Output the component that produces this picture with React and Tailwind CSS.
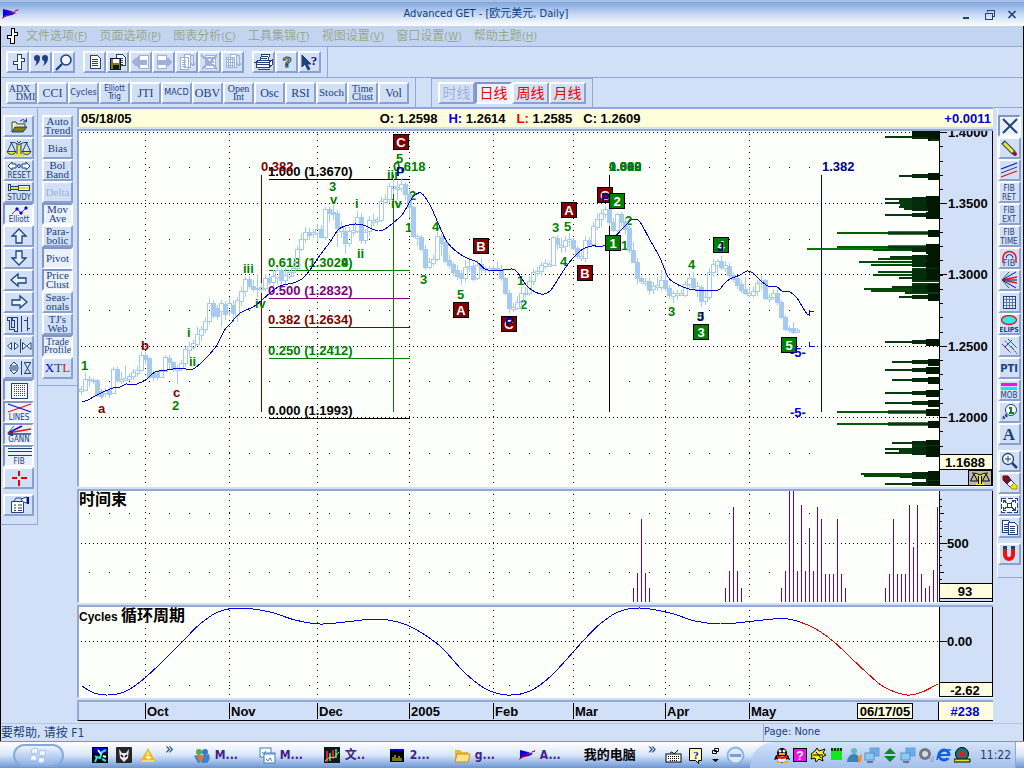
import React from "react";

const INK = "#21417c";

/* ---------- shared pieces ---------- */

function Tool({ label, pressed, disabled, className = "", children }) {
  const look = pressed
    ? "border-t-[#8296c4] border-l-[#8296c4] border-r-white border-b-white bg-[#eaf1fc]"
    : "border-t-white border-l-white border-r-[#8ba0cd] border-b-[#8ba0cd] bg-[#d1e0f6]";
  return (
    <button
      type="button"
      aria-label={label}
      aria-pressed={pressed ? true : undefined}
      disabled={disabled}
      className={`flex h-[22px] shrink-0 items-center justify-center overflow-hidden border-2 text-center whitespace-pre ${look} ${className}`}
    >
      {children}
    </button>
  );
}

function Svg({ w = 26, h = 18, children, crisp = true }) {
  return (
    <svg
      width={w}
      height={h}
      viewBox={`0 0 ${w} ${h}`}
      fill="none"
      stroke={INK}
      shapeRendering={crisp ? "crispEdges" : "auto"}
      className="block shrink-0"
      aria-hidden="true"
    >
      {children}
    </svg>
  );
}

function Tiny({ x = 13, y = 17, size = 8, bold, children }) {
  return (
    <text x={x} y={y} fontSize={size} textAnchor="middle" fill={INK} stroke="none"
      fontWeight={bold ? 700 : 400} fontFamily='"DejaVu Sans Condensed","DejaVu Sans",sans-serif'>
      {children}
    </text>
  );
}

/* ---------- icons ---------- */

const ScalesIcon = () => (
  <Svg crisp={false}>
    <path d="M11 4h4v12h-4z" fill="#f0e820" stroke="none" />
    <path d="M8 16.500h10" stroke="#e8e020" strokeWidth="2" />
    <path d="M11 5v10M15 5v10M4 3.500q4-1 9 2 5-3 9-2M11 2l2 2 2-2" />
    <path d="M5.500 4L1.500 12.500h8zM20.500 4l-4 8.500h8z" />
    <path d="M1 12.500h9q-1 3-4.500 3T1 12.500zM16 12.500h9q-1 3-4.500 3t-4.500-3z" fill="#f0e820" />
  </Svg>
);

const LogoMark = () => (
  <svg width="17" height="12" viewBox="0 0 17 12" aria-hidden="true" className="block">
    <path d="M1 1l4 1 4 1 5 2-4 2-5 1-4 2z" fill="#0000f0" />
    <path d="M0 10.500l4-3.500 2 1 3-4 2 2 3-4 1 1 1-2" fill="none" stroke="#e00020" />
  </svg>
);

const BarMark = ({ w = 20 }) => (
  <Svg w={w} h={18}>
    <path d="M9.500 1.500h4v4h3v3h-3v8h-4v-5h-4v-3h4z" fill="#fff" />
  </Svg>
);

const Page = ({ x = 4, y = 2, w = 9, h = 12 }) => (
  <g>
    <path d={`M${x} ${y}h${w - 3}l3 3v${h - 3}h-${w}z`} fill="#fff" />
    <path d={`M${x + 2} ${y + 4}h${w - 4}M${x + 2} ${y + 6}h${w - 4}M${x + 2} ${y + 8}h${w - 4}M${x + 2} ${y + 10}h${w - 4}`} strokeWidth="1" />
  </g>
);

const G = "#9fb2d6";

const fileTools = [
  ["Bar type", <BarMark />],
  ["Quotes", <Svg w={20} crisp={false}><path d="M3 5a3 3 0 116 0c0 4-2 6-5 8 1-2 2-4 1-5-1 0-2-1-2-3zM11 5a3 3 0 116 0c0 4-2 6-5 8 1-2 2-4 1-5-1 0-2-1-2-3z" fill={INK} stroke="none" /></Svg>],
  ["Search", <Svg w={20} crisp={false}><circle cx="12" cy="7" r="5" fill="#eef5ff" strokeWidth="1.6" /><path d="M8 11l-6 6" strokeWidth="2.4" /></Svg>],
  null,
  ["New", <Svg w={20}><Page x={5} y={2} w={10} h={13} /></Svg>],
  ["Save", <Svg w={20}><Page x={8} y={1} w={9} h={11} /><rect x="2.5" y="5.500" width="10" height="11" fill="#7d7b12" stroke="#101830" /><rect x="5" y="6" width="6" height="4" fill="#fff" stroke="none" /><rect x="5" y="12" width="6" height="4" fill="#101830" stroke="none" /></Svg>],
  ["Previous page", <Svg w={20}><path d="M8 2h9v13H8z" fill="#fff" stroke={G} /><path d="M1 9l6-5v3h8v4H7v3z" fill={G} stroke={G} /></Svg>, 1],
  ["Next page", <Svg w={20}><path d="M3 2h9v13H3z" fill="#fff" stroke={G} /><path d="M18 9l-6-5v3H4v4h8v3z" fill={G} stroke={G} /></Svg>, 1],
  ["Copy page", <Svg w={20}><g stroke={G}><path d="M7 1h6v13H7zM3 4h8v12H3z" fill="#fff" /><path d="M5 7h4M5 9h4M5 11h4M5 13h4M13 2h3v10M14 10l2 3 2-3" stroke={G} /></g></Svg>, 1],
  ["Delete page", <Svg w={20}><path d="M5 2h10v13H5z" fill="#fff" stroke={G} /><path d="M1 2l16 14M17 2L2 16M6 5h8M6 9h8M6 12h8" stroke={G} strokeWidth="2" /></Svg>, 1],
  ["Paste page", <Svg w={20}><g stroke={G}><path d="M7 1h6v13H7zM3 4h8v10H3z" fill="#fff" /><path d="M3 6h8M3 9h8M3 12h8M5 4v11M9 4v11M13 2h3v10M14 10l2 3 2-3" stroke={G} /></g></Svg>, 1],
  null,
  ["Print", <Svg w={20}><path d="M6 7l2-6h8l-2 6" fill="#fff" /><path d="M2 9l3-2h12l-2 2zM2 9h13v5H2zM15 9l3-2v5l-3 2" fill="#fff" /><path d="M8 3.500h6M7 5.500h6M2 11.500h13M4 16h12" /></Svg>],
  ["Help", <Svg w={20} crisp={false}><text x="10" y="14" fontSize="15" fontWeight="700" textAnchor="middle" fill="#f4ee20" stroke={INK} strokeWidth="1" fontFamily='"Liberation Sans",sans-serif'>?</text></Svg>],
  ["Context help", <Svg w={20} crisp={false}><path d="M2 2v12l3-3 3 6 2-1-3-5h4z" fill={INK} /><text x="14" y="12" fontSize="13" fontWeight="700" textAnchor="middle" fill="#10108c" stroke="none" fontFamily='"Liberation Serif",serif'>?</text></Svg>],
];

const Lbl = ({ size = 11, children }) => (
  <span className={size === 12 ? "text-[12px] leading-[12px]" : size === 10 ? "text-[10px] leading-[8px]" : "text-[11px] leading-[9px]"}>{children}</span>
);

const studyTools = [
  ["ADX DMI", <span className="flex flex-col text-[10px] leading-[8px]"><span className="pr-1">ADX</span><span className="pl-2">DMI</span></span>],
  ["CCI", <Lbl size={12}>CCI</Lbl>],
  ["Cycles", <span className="font-['DejaVu_Sans_Condensed',sans-serif] text-[9px]">Cycles</span>],
  ["Elliott Trig", <span className="font-['DejaVu_Sans_Condensed',sans-serif] text-[8px] leading-[8px]">{"Elliott\nTrig"}</span>],
  ["JTI", <Lbl size={12}>JTI</Lbl>],
  ["MACD", <span className="font-['DejaVu_Sans_Condensed',sans-serif] text-[9px]">MACD</span>],
  ["OBV", <Lbl size={12}>OBV</Lbl>],
  ["Open Int", <Lbl size={10}>{"Open\nInt"}</Lbl>],
  ["Osc", <Lbl size={12}>Osc</Lbl>],
  ["RSI", <Lbl size={12}>RSI</Lbl>],
  ["Stoch", <Lbl>Stoch</Lbl>],
  ["Time Clust", <Lbl size={10}>{"Time\nClust"}</Lbl>],
  ["Vol", <Lbl size={12}>Vol</Lbl>],
];

const arrow = {
  up: "M13 2l7 7h-4v7h-6V9H6z",
  down: "M13 16l7-7h-4V2h-6v7H6z",
  left: "M5 9l7-6v4h8v5h-8v3z",
  right: "M21 9l-7-6v4H6v5h8v3z",
};
const Arrow = ({ d }) => <Svg crisp={false}><path d={arrow[d]} fill="#e4f2fd" strokeWidth="1.3" /></Svg>;

const gridDots = [];
for (let r = 0; r < 6; r++) for (let c = 0; c < 6; c++) gridDots.push([7 + c * 2, 4 + r * 2]);

const leftTools = [
  ["Open", <Svg crisp={false}><path d="M6 15V5h4l1 2h8v3" fill="#fffb9a" /><path d="M6 15l3-5h12l-4 5z" fill="#7d7b12" /><path d="M14 4q3-3 6 0M17 5h3.500V1.500" /></Svg>],
  ["Scales", <ScalesIcon />],
  ["Reset", <Svg crisp={false}><path d="M2 5l4-4v2h4v4H6v2zM24 5l-4-4v2h-4v4h4v2z" fill="#fff" /><circle cx="13" cy="5" r="1.500" /><Tiny y={17} size={8}>RESET</Tiny></Svg>],
  ["Study", <Svg><path d="M2.500 1.500h2v6h-2zM4.500 3.500h8v3h-8zM12.500 2.500h11v5h-11z" fill="#fff" /><path d="M5 5h7M13 5h10" stroke="#e8e020" strokeWidth="2" /><Tiny y={17} size={8}>STUDY</Tiny></Svg>],
  ["Elliott", <Svg crisp={false}><path d="M6 9l5-5 4 4 6-6" stroke="#e01020" /><path d="M10 3h2v2h-2zM14 7h2v2h-2zM19 2h2v2h-2z" fill="#0000f0" stroke="#0000f0" /><Tiny y={17} size={8}>Elliott</Tiny></Svg>, 1],
  ["Scroll up", <Arrow d="up" />],
  ["Scroll down", <Arrow d="down" />],
  ["Scroll left", <Arrow d="left" />],
  ["Scroll right", <Arrow d="right" />],
  ["Bar spacing", <Svg><path d="M1.500 2.500h4v10h3v-7h-2v-3h5v14h-3v-2h-5v-9h-2zM15.500 1v16M18 5.500h3.500M21.500 2v14M21.500 13.500H24" /></Svg>],
  ["Squeeze bars", <Svg crisp={false}><path d="M5.500 5.500L1.500 9l4 3.500zM8.500 5.500l4 3.500-4 3.500zM16.500 5.500l4 3.500-4 3.500zM25 5.500L21 9l4 3.500z" fill="#fff" /><path d="M14.500 2v14" /></Svg>],
  ["Squeeze price", <Svg crisp={false}><path d="M8 3l4 4H4zM8 15l4-4H4z" fill="#fff" /><path d="M3 9h10M15.500 2v14M18 3.500h7M18 14.500h7M18.500 4l6 10.500M24.500 4l-6 10.500" /></Svg>],
  ["Grid", <Svg><path d="M5 2h16v15H5z" fill="#fff" />{gridDots.map(([x, y]) => <rect key={`${x}-${y}`} x={x + 1} y={y} width="1" height="1" fill={INK} stroke="none" />)}</Svg>, 1],
  ["Lines", <Svg crisp={false}><path d="M2 9L25 1" stroke="#f01010" strokeWidth="1.300" /><path d="M2 1l23 8" stroke="#1010d0" strokeWidth="1.300" /><Tiny y={17} size={8}>LINES</Tiny></Svg>, 1],
  ["Gann", <Svg crisp={false}><path d="M2 8l6-7" stroke="#108030" /><path d="M2 8l14-7" stroke="#1010d0" strokeWidth="1.500" /><path d="M2 8l23-4" stroke="#f01010" strokeWidth="1.500" /><path d="M2 9h23" strokeWidth="1.500" /><path d="M1 9l6-3v5z" fill={INK} stroke="none" /><Tiny y={17} size={8}>GANN</Tiny></Svg>, 1],
  ["Fibonacci", <Svg><path d="M2 1.500h24M2 4.500h24M2 8.500h24" /><Tiny y={17} size={8}>FIB</Tiny></Svg>, 1],
  ["Crosshair", <Svg><path d="M13 2v5M13 11v6M6 9h5M15 9h6" stroke="#f00000" strokeWidth="2" /></Svg>],
  null,
  ["Properties", <Svg crisp={false}><path d="M5.500 5.500h12v11h-12z" fill="#fff" /><path d="M8 5l2-3h5l2 3M8 9h2M12 9h4M8 12h2M12 12h4M8 14.500h2M12 14.500h4" /><path d="M15 3l6-2v6l-4-1z" fill="#fff" /><path d="M22 1v7" stroke="#10108c" strokeWidth="2" /></Svg>],
];

const studies = [
  ["Auto\nTrend"], ["Bias"], ["Bol\nBand"], ["Delta", 0, 1], ["Mov\nAve", 1], ["Para-\nbolic"],
  ["Pivot", 1], ["Price\nClust", 1], ["Seas-\nonals"], ["TJ's\nWeb"], ["Trade\nProfile", 1],
];

const R = ({ children, crisp }) => <Svg w={19} crisp={crisp}>{children}</Svg>;
const Two = ({ a, b }) => <R><Tiny x={9} y={8} size={8}>{a}</Tiny><Tiny x={9} y={17} size={8}>{b}</Tiny></R>;

const rightTools = [
  ["Delete all", <R crisp={false}><path d="M3 2l14 14M17 2L3 16" strokeWidth="2" /></R>, 1],
  ["Draw", <R crisp={false}><path d="M3 3l11 11" strokeWidth="5" /><path d="M4 4l9 9" stroke="#f0e820" strokeWidth="3" /><circle cx="15" cy="15" r="2" fill="#8a1020" stroke="none" /></R>],
  ["Parallel lines", <R crisp={false}><path d="M1 8l16-6" stroke="#1010d0" strokeWidth="1.300" /><path d="M1 12l16-6M1 9.500" /><path d="M1 16l16-6" stroke="#e01010" strokeWidth="1.300" /></R>],
  ["Fibonacci retracement", <Two a="FIB" b="RET" />],
  ["Fibonacci extension", <Two a="FIB" b="EXT" />],
  ["Fibonacci time", <Two a="FIB" b="TIME" />],
  ["Fibonacci arc", <R crisp={false}><path d="M3 14V9a6.500 6.500 0 0113 0v5" stroke="#f01010" strokeWidth="1.500" /><path d="M6 9a3.500 3.500 0 017 0" stroke="#1010d0" /><Tiny x={9} y={17} size={9}>FIB</Tiny></R>],
  ["Gann fan", <R crisp={false}><path d="M2 9l7-8M2 9l7 8" stroke="#108030" /><path d="M2 9l14-8M2 9l14 8" stroke="#1010d0" /><path d="M2 9l15-3M2 9l15 3" stroke="#f01010" strokeWidth="1.400" /><path d="M2 9h15" strokeWidth="1.300" /></R>],
  ["Gann box", <R><path d="M3 3h12v12H3zM6 3v12M9 3v12M12 3v12M3 6h12M3 9h12M3 12h12" fill="#e4effc" stroke="#6079a8" /><path d="M3 3h12v12H3z" /></R>],
  ["Ellipse", <R crisp={false}><ellipse cx="9" cy="5" rx="7.500" ry="4.500" fill="#30e8ee" stroke="#f01010" strokeWidth="1.300" /><Tiny x={9} y={17} size={7} bold>ELIPS</Tiny></R>],
  ["Pitchfork", <R crisp={false}><path d="M2 7l9 9M5 4l9 9M8 2l9 9M11 9l6 8" strokeDasharray="2 1" /><path d="M3 8l6 6" stroke="#901828" /><path d="M9 3l7 7" stroke="#108030" /><path d="M5 10l7-7" /></R>],
  ["PTI", <R><Tiny x={9} y={13} size={11} bold>PTI</Tiny></R>],
  ["MOB", <R><path d="M1 3h16" stroke="#f010f0" strokeWidth="3" /><path d="M1 7h16" stroke="#10e8f0" strokeWidth="3" /><Tiny x={9} y={17} size={8}>MOB</Tiny></R>],
  ["Expert", <R crisp={false}><circle cx="11" cy="7" r="5.500" fill="#fff" /><path d="M7 12l-5 4" strokeWidth="3" strokeDasharray="2 1" /><path d="M9 5h2v5M9 10h5" stroke="#108030" strokeWidth="2" /></R>],
  ["Text", <R crisp={false}><text x="9" y="15" fontSize="17" fontWeight="700" textAnchor="middle" fill={INK} stroke="none" fontFamily='"Liberation Serif",serif'>A</text></R>],
  null,
  ["Zoom in", <R crisp={false}><circle cx="8" cy="7" r="5.500" fill="#eef6ff" strokeWidth="1.300" /><path d="M5 7h6M8 4v6" /><path d="M12 11l5 5" strokeWidth="2.500" /></R>],
  ["Erase", <R crisp={false}><path d="M3 2h5l3 4-4 4-4-4z" fill="#7c1020" stroke="#5c0818" /><path d="M7 10l4-4 3 3-4 4z" fill="#fff" /><path d="M10 13l4-4 3 3v3h-5z" fill="#f0e020" stroke="#a09010" /></R>],
  ["Expand", <R><path d="M1 2h16v14H1z" fill="#fff" strokeDasharray="5 2" /><path d="M3 4l4 3M15 4l-4 3M3 14l4-3M15 14l-4-3M7 7h4v4H7zM3 7V4h3M12 4h3v3M3 11v3h3M15 11v3h-3" /></R>],
  ["Pages", <R><Page x={2} y={2} w={9} h={12} /><Page x={8} y={4} w={9} h={12} /></R>],
  null,
  ["Magnet", <R crisp={false}><path d="M5 3v7a4 4 0 008 0V3" stroke="#f01010" strokeWidth="4" /><path d="M3 2.500h4M11 2.500h4" strokeWidth="3" /></R>],
];

/* ---------- chart data: [top, bottom, down, high, low] ---------- */

const candles = [
  [389,391,0,386,395],[379,390,0,373,390],[379,380,0,376,387],[380,381,0,378,384],[380,395,1,379,397],[391,396,1,389,399],
  [391,393,0,388,397],[390,394,1,388,398],[369,393,0,367,393],[369,380,1,367,383],[379,381,0,372,384],[378,380,0,365,381],
  [376,379,0,373,381],[372,376,0,369,380],[370,373,0,366,377],[355,370,0,352,371],[355,359,1,352,364],[358,377,1,357,379],
  [373,377,1,371,381],[373,377,1,370,380],[371,377,0,369,378],[357,371,0,355,372],[358,362,1,355,370],[362,369,1,361,372],
  [368,370,0,365,384],[363,368,0,360,371],[349,363,0,347,367],[346,350,0,342,357],[343,347,0,339,350],[334,344,0,327,346],
  [329,335,0,326,341],[321,329,0,318,333],[303,321,0,298,324],[303,315,1,300,318],[308,316,1,305,320],[303,311,0,300,327],
  [304,314,1,301,320],[303,311,0,297,316],[305,313,1,300,322],[300,315,0,297,322],[291,301,0,287,306],[279,291,0,277,297],
  [279,286,1,276,289],[286,289,1,280,292],[288,289,0,274,297],[287,289,0,283,293],[278,288,0,274,291],[278,282,1,275,285],
  [276,282,0,270,286],[270,277,0,267,284],[270,280,1,268,285],[275,280,0,268,284],[272,276,0,270,279],[268,272,0,262,277],
  [249,268,0,246,270],[239,249,0,233,251],[232,239,0,227,243],[232,235,1,228,240],[232,234,0,229,238],[229,233,0,224,242],
  [229,237,1,225,238],[209,237,0,207,240],[209,213,1,207,222],[212,214,1,205,220],[213,228,1,210,247],[227,231,0,221,238],
  [231,243,1,226,254],[231,243,0,227,247],[230,232,0,222,236],[217,231,0,211,233],[217,240,1,213,244],[232,240,0,229,244],
  [220,231,0,216,236],[220,222,0,214,226],[219,221,0,217,225],[201,220,0,197,222],[199,202,0,194,204],[186,199,0,183,203],
  [186,188,0,178,194],[187,189,0,181,200],[184,188,0,178,192],[184,194,1,182,200],[194,207,1,190,218],[207,236,1,206,238],
  [236,238,0,234,246],[237,249,1,235,251],[249,267,1,245,270],[262,267,0,258,269],[259,263,0,255,266],[236,259,0,232,261],
  [237,243,1,234,256],[242,261,1,240,263],[260,265,1,255,269],[264,272,1,262,276],[270,276,1,265,280],[273,278,1,270,285],
  [267,278,0,260,282],[266,268,0,257,272],[266,279,1,262,281],[265,278,0,260,280],[264,269,1,258,273],[268,270,0,266,273],
  [268,270,0,266,273],[268,269,0,265,272],[268,269,0,261,271],[269,278,1,265,281],[278,293,1,277,295],[293,308,1,290,313],
  [307,309,0,303,312],[302,308,0,296,310],[293,302,0,287,311],[293,294,0,287,297],[281,293,0,276,296],[272,281,0,269,285],
  [271,273,0,267,276],[265,271,0,262,276],[263,266,0,259,269],[264,266,0,261,267],[237,265,0,236,266],[238,244,1,235,250],
  [245,247,0,238,253],[240,246,0,236,252],[239,241,0,233,247],[240,248,1,238,250],[248,256,1,246,259],[256,258,0,252,261],
  [240,258,0,236,262],[240,244,1,237,247],[226,244,0,222,247],[219,227,0,213,230],[213,219,0,209,227],[209,214,0,206,218],
  [209,222,1,204,226],[222,230,1,218,232],[214,230,0,213,232],[214,222,1,212,226],[221,229,1,217,235],[228,250,1,226,253],
  [250,262,1,242,263],[262,278,1,258,284],[278,281,1,276,284],[281,283,0,278,286],[281,290,1,278,295],[286,289,0,282,294],
  [285,287,0,277,291],[280,287,0,270,291],[280,288,1,266,291],[288,295,1,285,299],[293,296,0,291,303],[293,295,0,290,300],
  [293,295,0,290,296],[284,295,0,281,297],[278,284,0,275,288],[278,287,1,272,290],[286,289,0,282,297],[287,301,1,285,307],
  [297,301,0,290,305],[272,297,0,268,300],[264,272,0,259,276],[261,265,0,259,273],[261,267,1,256,270],[265,268,0,261,272],
  [266,275,1,263,279],[275,279,1,272,282],[278,285,1,275,289],[284,290,1,280,293],[289,293,1,277,295],[293,295,0,287,297],
  [291,295,0,287,298],[283,291,0,280,296],[280,283,0,276,290],[280,298,1,279,300],[297,299,0,294,303],[293,297,0,289,300],
  [293,302,1,289,305],[302,317,1,300,319],[317,329,1,315,331],[328,330,1,326,333],[328,332,1,322,334],[330,332,0,328,333],
];

const average = [
  [82,402],[88,400],[95,396],[103,392],[113,388],[120,387],[126,384],[130,385],[137,384],[147,379],[155,372],[167,370],[182,368],[189,370],[195,368],
  [207,357],[217,345],[224,331],[231,323],[240,313],[253,307],[262,300],[270,293],[280,286],[293,283],[302,279],[310,270],[318,258],[330,242],[338,230],
  [345,226],[355,224],[363,225],[370,228],[378,231],[385,229],[393,223],[402,215],[408,205],[413,197],[421,193],[430,205],[438,223],[447,242],[457,252],
  [469,259],[477,262],[485,269],[495,271],[512,269],[518,273],[528,287],[541,294],[550,291],[560,276],[568,264],[577,254],[583,249],[592,246],[603,246],
  [612,240],[622,229],[630,221],[634,219],[640,222],[650,240],[660,258],[668,277],[675,283],[683,287],[695,290],[718,290],[723,285],[730,279],[740,275],
  [747,271],[753,273],[760,280],[768,286],[777,287],[782,291],[790,292],[797,298],[803,308],[807,314],[809,315],
];

const months = [["Oct", 145], ["Nov", 229], ["Dec", 317], ["2005", 409], ["Feb", 493], ["Mar", 573], ["Apr", 665], ["May", 749]];

const GREEN = "#008000", MAROON = "#800000", NAVY = "#000080", PURPLE = "#800080";

const levels = [
  ["1.000 (1.3670)", 179, "#000"], ["0.618 (1.3029)", 270, GREEN], ["0.500 (1.2832)", 298, PURPLE],
  ["0.382 (1.2634)", 327, MAROON], ["0.250 (1.2412)", 358, GREEN], ["0.000 (1.1993)", 418, "#000"],
];

const waves = [
  ["1",81,370],["a",98,413,MAROON],["b",141,350,MAROON],["c",173,397,MAROON],["2",172,410],["i",187,337],["ii",189,366],["iii",243,273],
  ["iv",255,308],["3",329,191],["v",330,204],["i",355,208],["ii",357,258],["5",396,163],["iii",387,179],["iv",391,208],["2",409,200],["1",405,232],
  ["4",432,231],["3",420,284],["5",457,299],["1",517,285],["2",520,309],["3",552,232],["5",564,231],["4",560,266],["2",625,225],["1",621,250],
  ["3",668,316],["4",688,269],["5",697,321],["J",697,321,NAVY],["4",341,267],["P",396,176,NAVY],
];

const tags = [
  ["C",393,134,0],["A",453,302,0],["B",473,238,0],["C",501,316,0,"P",10],["A",561,202,0],["B",577,265,0],["C",597,187,0,"P",15],
  ["2",609,193,1],["1",605,235,1],["4",713,237,1,"J",14],["3",693,324,1],["5",781,337,1],
];

const profile = [
  [136,885],[139,930],[175,899],[198,885],[200,899],[202,885],[204,900],[206,899],[208,904],[214,885],[232,837],[246,837],[248,807],[249,873],
  [256,890],[258,878],[261,859],[264,871],[268,912],[271,878],[274,873],[277,899],[280,912],[283,912],[286,892],[288,864],[290,871],[292,905],[296,899],
  [341,885],[361,892],[369,885],[379,892],[392,885],[402,885],[411,837],[423,837],[442,892],[445,912],[448,885],[450,899],[452,885],[473,861],[475,864],[476,900],[480,926],[483,885],
];
const barColor = (x) => (x < 830 ? "#007a00" : x < 850 ? "#006000" : x < 880 ? "#004a0a" : "#063a0e");

const clusterBars = [
  [633,588],[637,573],[641,519],[645,573],[649,588],[725,588],[729,571],[733,507],[737,571],[741,588],[781,588],[785,571],[789,491],[793,491],
  [797,571],[801,505],[805,571],[809,528],[813,571],[817,507],[821,519],[825,574],[829,574],[833,574],[837,519],[841,574],[845,588],[885,588],[889,574],
  [893,519],[897,574],[901,574],[905,574],[909,505],[913,547],[917,505],[921,574],[925,588],[929,586],[933,570],[937,507],
];

const smooth = (pts) => {
  let d = `M${pts[0][0]} ${pts[0][1]}`;
  for (let i = 0; i < pts.length - 1; i++) {
    const a = pts[Math.max(0, i - 1)], b = pts[i], c = pts[i + 1], e = pts[Math.min(pts.length - 1, i + 2)];
    d += `C${b[0] + (c[0] - a[0]) / 6} ${b[1] + (c[1] - a[1]) / 6} ${c[0] - (e[0] - b[0]) / 6} ${c[1] - (e[1] - b[1]) / 6} ${c[0]} ${c[1]}`;
  }
  return d;
};

const cycleBlue = [
  [82,686],[94,693],[108,695],[124,692],[140,682],[160,664],[183,641],[200,624],[218,612],[240,608],[270,612],[295,620],[320,624],[345,622],[375,619],[398,622],
  [415,629],[440,646],[465,673],[486,689],[507,695],[530,691],[552,675],[583,641],[600,624],[618,612],[640,608],[670,613],[695,621],[720,624],[745,622],[773,619],[788,619],[800,622],
];
const cycleRed = [[800,622],[816,629],[834,642],[850,657],[866,672],[884,687],[907,695],[922,692],[938,684]];

const chartFont = '"Liberation Sans","Noto Sans CJK SC",sans-serif';

function Plot({ top, height, majors, minors, children, axis, label }) {
  return (
    <div className="border-t-2 border-b border-l-2 border-t-[#93a9d4] border-b-white border-l-[#93a9d4]">
      <svg viewBox={`79 ${top} 914 ${height}`} className="block h-auto w-full bg-[#fcfffa]" shapeRendering="crispEdges"
        fontFamily={chartFont} fontWeight="700" fontSize="13" role="img" aria-label={label}>
        <g stroke="#000" fill="none">
          {majors.map((y) => <path key={y} d={`M81 ${y + 0.5}H938`} strokeDasharray="1 3" />)}
          {months.map(([m, x]) => <path key={m} d={`M${x + 0.5} ${top + 3}V${top + height}`} strokeDasharray="1 5" />)}
          {minors.map((y) => <path key={y} d={`M89 ${y + 0.5}H810`} strokeDasharray="1 19" />)}
        </g>
        {children}
        <rect x="939" y={top} width="54" height={height} fill="#d1e0f6" />
        <path d={`M939.5 ${top}V${top + height}M992.5 ${top}V${top + height}`} stroke="#000" />
        {axis}
      </svg>
    </div>
  );
}

function ValueBox({ y, h = 16, text }) {
  return (
    <g>
      <rect x="939.5" y={y + 0.5} width="53" height={h} fill="#fffee0" stroke="#000" />
      <text x="965" y={y + 13} textAnchor="middle">{text}</text>
    </g>
  );
}

const priceTicks = [];
for (let y = 132; y < 455; y += 14.25) priceTicks.push(Math.round(y));

function PriceChart() {
  return (
    <Plot top={131} height={355} majors={[132, 203, 274, 346, 417]} minors={[167, 239, 310, 381, 453]} label="欧元美元 daily price"
      axis={
        <g>
          {priceTicks.map((y) => <path key={y} d={`M940 ${y + 0.5}h3`} stroke="#000" />)}
          {["1.4000", "1.3500", "1.3000", "1.2500", "1.2000"].map((t, i) => {
            const y = [132, 203, 274, 346, 417][i];
            return <g key={t}><path d={`M940 ${y + 0.5}h7`} stroke="#000" /><text x="948" y={y + 5}>{t}</text></g>;
          })}
          <ValueBox y={454} h={15} text="1.1688" />
          <path d="M940 485.500h53" stroke="#000" />
          <rect x="968.5" y="470.500" width="23" height="15" fill="#b8b8b0" stroke="#000" />
          <g shapeRendering="auto" fill="none">
            <path d="M974 474q4 0 6 2 2-2 6-2M980 475v9M976 484h8" stroke="#f0e820" strokeWidth="2" />
            <path d="M974 474l-3.500 7h7zM986 474l-3.500 7h7zM972 473q5 0 8 2 3-2 8-2M978.500 476v8M981.500 476v8" stroke="#000" />
          </g>
        </g>
      }>
      {profile.map(([y, x], i) => (
        <g key={y} fill={barColor(x)}>
          <rect x={x} y={y} width={939 - x} height="2" />
          {x < 905 && <rect x={x < 850 ? 888 : 912} y={y - 1} width={x < 850 ? 51 : 27} height="4" fill="#052c0b" opacity={x < 850 ? 0.7 : 1} />}
          {x < 905 && <rect x={i % 2 ? 926 : 928} y={y - 2} width={i % 2 ? 13 : 11} height="7" fill="#031804" />}
        </g>
      ))}
      <rect x="912" y="131" width="27" height="6" fill="#031804" />
      {levels.map(([t, y, c]) => (
        <g key={t}><path d={`M269 ${y + 0.5}H410`} stroke={c} /><text x="268" y={y - 3} fill={c}>{t}</text></g>
      ))}
      <g fill="none">
        <path d="M261.5 175V412" stroke={MAROON} />
        <path d="M393.5 175V412" stroke={GREEN} />
        <path d="M609.5 175V412" stroke="#000" />
        <path d="M821.5 175V412" stroke={NAVY} />
      </g>
      <text x="261" y="171" fill={MAROON}>0.382</text>
      <text x="393" y="171" fill={GREEN}>0.618</text>
      <text x="609" y="171" fill={NAVY}>1.000</text>
      <text x="609" y="171" fill={GREEN}>0.618</text>
      <text x="609" y="171" fill={GREEN}>1.382</text>
      <text x="822" y="171" fill={NAVY}>1.382</text>
      {waves.filter((w) => !w[3] || w[3] === MAROON).map(([t, x, y, c]) => <text key={`${t}${x}${y}`} x={x} y={y} fill={c || GREEN}>{t}</text>)}
      <g stroke="#a6caf0">
        {candles.map(([t, b, down, hi, lo], i) => {
          const x = 81 + i * 4;
          return (
            <g key={i}>
              <path d={`M${x + 0.5} ${hi}V${t}M${x + 0.5} ${b}V${lo}`} />
              <rect x={x - 1.5} y={t + 0.5} width="4" height={Math.max(1, b - t)} fill={down ? "#a6caf0" : "none"} />
            </g>
          );
        })}
      </g>
      <path d={smooth(average)} fill="none" stroke="#0000d8" />
      <path d="M814 311.500h-4.500v4M809.500 342v4.500h5" fill="none" stroke="#0000d8" />
      {waves.filter((w) => w[3] === NAVY).map(([t, x, y, c]) => <text key={`${t}${x}`} x={x} y={y} fill={c}>{t}</text>)}
      {tags.map(([t, x, y, g, over, dy]) => (
        <g key={`${t}${x}`}>
          <rect x={x + 0.5} y={y + 0.5} width="15" height="15" fill={g ? GREEN : MAROON} stroke="#000" />
          <text x={x + 8} y={y + 13} textAnchor="middle" fill="#fff">{t}</text>
          {over && <text x={x + 4} y={y + dy} fill={NAVY}>{over}</text>}
        </g>
      ))}
      <text x="790" y="357" fill="#0000d8">-5-</text>
      <text x="790" y="417" fill="#0000d8">-5-</text>
    </Plot>
  );
}

function ClusterChart() {
  return (
    <Plot top={491} height={111} majors={[543]} minors={[513, 572]} label="时间束"
      axis={
        <g>
          {[499, 506, 513, 521, 528, 536, 550, 557, 565, 572, 579].map((y) => <path key={y} d={`M940 ${y + 0.5}h${y === 513 || y === 572 ? 4 : 2}`} stroke="#000" />)}
          <path d="M940 543.500h7" stroke="#000" /><text x="947" y="548">500</text>
          <ValueBox y={583} h={15} text="93" />
          <path d="M940 601.500h53" stroke="#000" />
        </g>
      }>
      <path d={clusterBars.map(([x, y]) => `M${x + 0.5} ${y}V602`).join("")} stroke="#780078" />
      <text x="79" y="505" fontSize="16">时间束</text>
    </Plot>
  );
}

function CycleChart() {
  return (
    <Plot top={607} height={90} majors={[641]} minors={[685]} label="Cycles 循环周期"
      axis={
        <g>
          <path d="M940 641.500h7" stroke="#000" /><text x="947" y="646">0.00</text>
          <ValueBox y={682} h={14} text="-2.62" />
        </g>
      }>
      <path d={smooth(cycleBlue)} fill="none" stroke="#0000f0" />
      <path d={smooth(cycleRed)} fill="none" stroke="#f00000" />
      <text x="79" y="621"><tspan fontSize="12">Cycles </tspan><tspan fontSize="16">循环周期</tspan></text>
    </Plot>
  );
}

function TimeAxis() {
  return (
    <div className="border-t-2 border-b border-l-2 border-t-[#93a9d4] border-b-black border-l-[#93a9d4]">
      <svg viewBox="79 702 914 18" className="block h-auto w-full bg-[#d1e0f6]" fontFamily={chartFont} fontWeight="700" fontSize="13" shapeRendering="crispEdges" role="img" aria-label="Dates">
        {months.map(([m, x]) => <g key={m}><path d={`M${x + 0.5} 703v16`} stroke="#000" /><text x={x + 2} y="716">{m}</text></g>)}
        <rect x="857.5" y="703.500" width="55" height="15" fill="#fffee0" stroke="#000" />
        <text x="885" y="716" textAnchor="middle">06/17/05</text>
        <rect x="939" y="702" width="54" height="18" fill="#fffee0" />
        <path d="M938.5 702v18" stroke="#000" />
        <text x="965" y="716" textAnchor="middle" fill="#0000d8">#238</text>
      </svg>
    </div>
  );
}

/* ---------- taskbar ---------- */

const T = ({ children, w = 17 }) => <svg width={w} height="17" viewBox={`0 0 ${w} 17`} className="block shrink-0" aria-hidden="true">{children}</svg>;

const quick = [
  ["Trading", <T><rect width="16" height="16" fill="#000" /><path d="M1 1h14v5H1z" fill="#0000c8" /><path d="M3 15l2-5 3 1 2-6 4-2M3 9l3 2M10 12l4 2" stroke="#20e8f0" strokeWidth="2" fill="none" /><path d="M6 3l3 4M11 9l3 1" stroke="#fff" strokeWidth="2" /></T>],
  ["Player", <T><rect width="16" height="16" rx="1" fill="#262626" /><path d="M3 2l3 4h4l3-4-1 9-4 4-4-4z" fill="#e8e8e8" /><path d="M5 8l2 2M11 8L9 10" stroke="#000" strokeWidth="1.500" /></T>],
  ["Prism", <T><path d="M8 1l8 14H0z" fill="#f4b818" /><path d="M8 4l2 4H6z" fill="#ffe890" /><path d="M6 10l3-1 2 2-3 1zM2 14h12" fill="#fff" stroke="#fff7c0" /></T>],
];

const People = <T><circle cx="5" cy="5" r="3" fill="#58a848" /><circle cx="11" cy="5" r="3" fill="#3c78c8" /><path d="M0 9q6-3 8 6l-4 1zM8 8l7-1q2 6-2 9H8z" fill="#3888c8" /><path d="M2 8l5 8 3-8" fill="#e87820" /></T>;
const Windows = <T><rect x="1" y="1" width="11" height="9" fill="#fff" stroke="#3c80c0" /><rect x="5" y="6" width="11" height="10" fill="#fff" stroke="#3c80c0" /><path d="M5 7h11M3 5l2 2 2-3M7 12l2 2 2-3 2 3" stroke="#3c80c0" fill="none" /></T>;
const Bars = <T><rect width="16" height="16" fill="#101818" /><path d="M3 4v11M9 3v8" stroke="#e02020" strokeWidth="2" /><path d="M6 6v8M12 2v9" stroke="#20b8a8" strokeWidth="2" /><path d="M1 14l5-4 4 1 5-6" stroke="#f0e020" fill="none" /></T>;
const Hist = <T><rect x="1" y="2" width="14" height="13" fill="#000" /><path d="M1 3h14" stroke="#0000c8" strokeWidth="2" /><path d="M4 14v-4M6 14V8M8 14v-3M10 14V9M12 14v-3" stroke="#f0f020" /></T>;
const Folder = <T><path d="M1 14V3h5l2 2h6v9z" fill="#e8b838" /><path d="M1 15l2-8h13l-2 8z" fill="#fbe488" stroke="#c89020" /></T>;

const tasks = [["M...", People], ["M...", Windows], ["文..", Bars], ["2...", Hist], ["g...", Folder], ["A...", <LogoMark />]];

const Monitors = <T><rect x="6" y="1" width="9" height="8" fill="#60b0f0" stroke="#8098c0" /><rect x="1" y="6" width="9" height="7" fill="#80d0ff" stroke="#7088b0" /><path d="M3 15h6" stroke="#6078a0" strokeWidth="2" /></T>;

const tray = [
  <T><ellipse cx="8" cy="6" rx="5" ry="5" fill="#000" /><path d="M2 8h12l2 5-3-1-5 4-5-4-3 1z" fill="#000" /><ellipse cx="8" cy="12" rx="4" ry="3" fill="#fff" /><path d="M3 8q5 3 10 0v3q-5 2-10 0z" fill="#e81010" /><circle cx="6" cy="4" r="1.500" fill="#fff" /><circle cx="10" cy="4" r="1.500" fill="#fff" /><path d="M5 7h6M2 15h4M10 15h4" stroke="#f8b010" strokeWidth="2" /></T>,
  <T><rect x="1.500" y="1.500" width="13" height="13" fill="#f010e0" stroke="#000" /><text x="8" y="13" fontSize="12" fontWeight="700" textAnchor="middle" fill="#fff" fontFamily="Liberation Sans">?</text></T>,
  <T><path d="M1 7l4-3 2-3 2 3 6-2-2 4 3 2-4 2 1 4-4-2-3 3-1-4-4 1 1-3z" fill="#f8f020" stroke="#000" /><path d="M3 8h10M6 5l5 6" stroke="#000" /></T>,
  <T><rect x="3" y="1" width="11" height="12" fill="#10e820" /><path d="M3 2.500h11" stroke="#103010" strokeWidth="3" strokeDasharray="2 1" /></T>,
  <T><circle cx="8" cy="4" r="3" fill="#68b8c0" /><path d="M1 15q1-8 7-8t5 8z" fill="#3c80b8" /><path d="M12 10l4-3-1 8-3 1z" fill="#f09028" /></T>,
  Monitors,
  <T><path d="M8 1l6 6H2zM8 15l6-6H2z" fill="#108828" /></T>,
  Monitors,
  <T><circle cx="7" cy="7" r="6" fill="#707880" /><circle cx="7" cy="7" r="3" fill="#d8dce0" /><path d="M12 11q2 1 1 4M15 9v6" stroke="#90a0c0" fill="none" /></T>,
  <T><circle cx="8" cy="8" r="5" fill="none" stroke="#1060e0" strokeWidth="3" /><path d="M4 8h9" stroke="#1060e0" strokeWidth="2" /><path d="M11 10h5" stroke="#b8cff2" strokeWidth="2" /><path d="M1 13Q2 2 15 3" stroke="#1060e0" fill="none" strokeWidth="1.500" /></T>,
  <T><circle cx="8" cy="7" r="6.500" fill="#107878" stroke="#000" /><circle cx="8" cy="7" r="3" fill="#e02020" /><path d="M0 12h16v3H0z" fill="#e8e020" stroke="#000" /></T>,
];

const menus = [["文件选项", "F"], ["页面选项", "P"], ["图表分析", "C"], ["工具集锦", "T"], ["视图设置", "V"], ["窗口设置", "W"], ["帮助主题", "H"]];

const quote = [["O:", "1.2598", ""], ["H:", "1.2614", "text-[#0000d8]"], ["L:", "1.2585", "text-[#f00000]"], ["C:", "1.2609", ""]];

export default function App() {
  return (
    <div className="flex min-h-screen flex-col bg-[#d1e0f6] font-['DejaVu_Sans_Condensed','Noto_Sans_CJK_SC',sans-serif] text-[11px] text-[#21417c]">
      <header className="grid h-[26px] grid-cols-[1fr_auto_1fr] items-center border-t-2 border-[#a9c0e8] bg-linear-to-b from-[#7fa4df] via-[#c5d8f3] to-white px-[2px]">
        <LogoMark />
        <h1 className="pr-[52px] text-[11px] text-[#0a3f80]">Advanced GET - [欧元美元, Daily]</h1>
        <div className="flex justify-end gap-3 pr-1">
          <button type="button" aria-label="Minimize"><Svg w={11} h={11}><path d="M2 9h6" strokeWidth="2" /></Svg></button>
          <button type="button" aria-label="Restore"><Svg w={11} h={11}><path d="M3.500 3V1.500h7v6H8M1.500 4.500h7v6h-7zM1 4h8M3 1h8" /></Svg></button>
          <button type="button" aria-label="Close"><Svg w={11} h={11} crisp={false}><path d="M1.500 2l7 7M8.500 2l-7 7" strokeWidth="1.700" /></Svg></button>
        </div>
      </header>

      <div className="flex flex-1 flex-col border-x border-black">
        <nav className="flex h-5 items-center gap-3 bg-[#c3d4f0] pl-[1px] text-[12px] text-[#99a98e]">
          <Svg w={20} h={18}><path d="M9.500 1.500h3v4h3v3h-3v8h-4v-5h-3v-3h4z" fill="#fff" stroke="#000" strokeWidth="1" /></Svg>
          <div className="-ml-2 flex gap-3">
            {menus.map(([t, k]) => <button key={k} type="button" className="leading-4 whitespace-nowrap">{t}<span className="text-[11px]">(<u>{k}</u>)</span></button>)}
          </div>
        </nav>

        <div className="flex h-8 items-center border-t border-b border-t-[#93a9d4] border-b-[#93a9d4]">
          <div className="flex h-full items-center border-r border-[#93a9d4] pr-1.5 pl-[5px]">
            {fileTools.map((t, i) => t
              ? <Tool key={t[0]} label={t[0]} disabled={!!t[2]} className="w-[23px]">{t[1]}</Tool>
              : <span key={i} className="w-2" />)}
          </div>
        </div>

        <div className="flex h-[29px] items-center gap-[15px] font-['Liberation_Serif','Noto_Sans_CJK_SC',serif]">
          <div className="flex h-full items-center border-r border-[#93a9d4] pr-1.5 pl-[5px]">
            {studyTools.map(([n, c]) => <Tool key={n} label={n} className="w-[31px]">{c}</Tool>)}
          </div>
          <div className="flex h-full items-center border-x border-t border-[#93a9d4] px-1.5">
            <Tool disabled className="w-[37px] text-[14px] text-[#9fb2d6]">时线</Tool>
            <Tool pressed className="w-[37px] text-[14px] text-[#f00000]">日线</Tool>
            <Tool className="w-[37px] text-[14px] text-[#f00000]">周线</Tool>
            <Tool className="w-[37px] text-[14px] text-[#f00000]">月线</Tool>
          </div>
        </div>

        <main className="flex flex-1 items-stretch border-t border-[#93a9d4]">
          <div className="flex w-[76px] shrink-0 items-start">
            <div className="w-[37px] border-r border-b border-[#93a9d4] pt-[7px] pb-2 pl-[2px]">
              {leftTools.map((t, i) => t
                ? <Tool key={t[0]} label={t[0]} pressed={!!t[2]} className="w-[31px]">{t[1]}</Tool>
                : <div key={i} className="h-[5px]" />)}
            </div>
            <div className="w-[39px] border-b border-[#93a9d4] pt-[7px] pb-1.5 pl-1 font-['Liberation_Serif',serif]">
              {studies.map(([n, p, off]) => (
                <Tool key={n} pressed={!!p} disabled={!!off} className={off ? "w-[31px] text-[#9fb2d6]" : "w-[31px]"}>
                  <Lbl size={n.includes("Profile") ? 10 : 11}>{n}</Lbl>
                </Tool>
              ))}
              <Tool className="w-[31px] text-[13px]"><span className="text-[#0000d8]">X</span><span>T</span><span className="text-[#e01010]">L</span></Tool>
            </div>
          </div>

          <div className="flex min-w-0 flex-1 flex-col gap-[2px]">
            <div className="grid h-[19px] grid-cols-[1fr_auto_1fr] items-center border-t border-l-2 border-[#93a9d4] bg-[#fffedb] px-[2px] font-['Liberation_Sans',sans-serif] text-[13px] font-bold text-black">
              <span>05/18/05</span>
              <div className="flex gap-[11px] pr-[52px]">
                {quote.map(([k, v, c]) => <span key={k}><span className={c}>{k}</span> {v}</span>)}
              </div>
              <span className="text-right text-[#0000d8]">+0.0011</span>
            </div>
            <PriceChart />
            <ClusterChart />
            <CycleChart />
            <TimeAxis />
          </div>

          <div className="w-[30px] shrink-0">
            <div className="ml-1 border-b border-l border-[#93a9d4] border-l-white pt-[7px] pb-3">
              {rightTools.map((t, i) => t
                ? <Tool key={t[0]} label={t[0]} pressed={!!t[2]} className="w-[23px]">{t[1]}</Tool>
                : <div key={i} className="h-[5px]" />)}
            </div>
          </div>
        </main>

        <footer className="flex h-[18px] items-center border-t border-[#b4c6e6]">
          <span className="flex-1 text-[12px]">要帮助, 请按 F1</span>
          <span className="w-[260px] border-l border-[#93a9d4] text-[11px]">Page: None</span>
        </footer>
      </div>

      <div className="flex h-[27px] items-center border-t border-[#6f94cf] bg-linear-to-b from-white via-[#d9e7fa] to-[#6c95d4]">
        <button type="button" aria-label="Start" className="ml-[13px] flex h-[23px] w-[51px] items-center justify-center rounded-full border-2 border-[#86a8dc] bg-linear-to-b from-[#eef5ff] to-[#8fb2e6]">
          <svg width="22" height="18" viewBox="0 0 22 18" aria-hidden="true"><path d="M4 3q3-2 6 0l-1 5q-3-2-6 0zM12 4q3 2 6 0l-1 5q-3 2-6 0zM3 10q3-2 6 0l-1 5q-3-2-6 0zM11 11q3 2 6 0l-1 5q-3 2-6 0z" fill="#f2f8ff" stroke="#a8c4ec" /></svg>
        </button>
        <div className="ml-7 flex gap-[7px]">
          {quick.map(([n, ic]) => <button key={n} type="button" aria-label={n}>{ic}</button>)}
        </div>
        <button type="button" aria-label="More shortcuts" className="ml-2 -mt-3 text-[16px] leading-4">»</button>
        <div className="ml-5 flex">
          {tasks.map(([t, ic], i) => (
            <button key={i} type="button" className="flex w-[65px] items-center gap-1 text-[12px] font-bold text-[#43208a]">{ic}<span>{t}</span></button>
          ))}
        </div>
        <button type="button" className="text-[13px] font-bold whitespace-nowrap text-black">我的电脑</button>
        <button type="button" aria-label="More items" className="ml-3 -mt-3 text-[16px] leading-4">»</button>
        <div className="ml-2 flex items-center gap-[6px]">
          <T><rect x="1" y="7" width="15" height="8" fill="#fff" stroke="#000" /><path d="M3 9.500h11M3 11.500h11M5 13.500h7" stroke="#000" strokeDasharray="1 1" /><path d="M5 6q2-2 3 0t5-3" stroke="#000" fill="none" /></T>
          <T><path d="M1.500 1.500h12v12h-3v3l-3-3h-6z" fill="#fffbb0" stroke="#000" /><text x="8" y="12" fontSize="11" fontWeight="700" textAnchor="middle" fill="#0000c0" fontFamily="Liberation Serif">?</text></T>
          <T w={9}><path d="M3.500 1.500h4v3h-4zM1.500 3.500h4v3h-4z" fill="#fff" stroke="#000" /><path d="M1 12h7l-3.500 3z" fill="#000" /></T>
          <svg width="19" height="19" viewBox="0 0 19 19" aria-hidden="true"><circle cx="9.500" cy="9.500" r="8" fill="#dbe9fb" stroke="#8fb0e0" strokeWidth="2" /><path d="M4 9.500h11" stroke="#7a9fd8" strokeWidth="3" /></svg>
        </div>
        <div className="mr-2 ml-auto flex h-full items-center gap-[1px] rounded-tl-3xl border-r border-[#88a8dc] bg-linear-to-b from-[#d3e3fa] to-[#a3c0ec] pr-1 pl-6">
          {tray.map((ic, i) => <span key={i}>{ic}</span>)}
          <time className="pl-2 text-[12px] text-[#2c3c60]">11:22</time>
        </div>
      </div>
    </div>
  );
}
